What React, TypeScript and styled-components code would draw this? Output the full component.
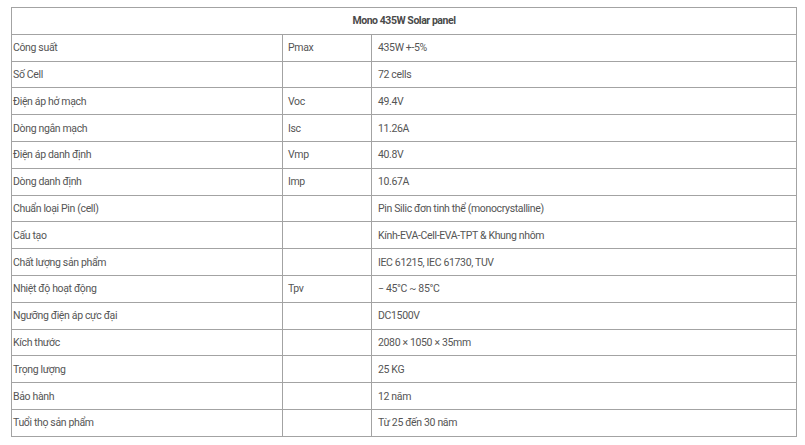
import React from "react";
import styled, { createGlobalStyle } from "styled-components";

const GlobalStyle = createGlobalStyle`
  html, body {
    margin: 0;
    padding: 0;
    background: #ffffff;
  }
  body {
    font-family: Roboto, "Noto Sans", Arial, sans-serif;
  }
`;

const Page = styled.div`
  padding: 7px 9px 0 11px;
`;

const SpecTable = styled.table`
  width: 786px;
  border-collapse: collapse;
  table-layout: fixed;
  border: 1px solid #a3a3a3;
  font-size: 10.5px;
  letter-spacing: -0.35px;
  color: #555555;
`;

const HeadCell = styled.th`
  height: 25.8px;
  padding: 0;
  border: 1px solid #a3a3a3;
  font-weight: 700;
  letter-spacing: -0.45px;
  text-align: center;
  color: #4a4a4a;
`;

const Cell = styled.td<{ $pad: number }>`
  height: 25.8px;
  padding: 0 0 0 ${(p) => p.$pad}px;
  border: 1px solid #a3a3a3;
  vertical-align: middle;
  white-space: nowrap;
`;

const rows: [string, string, string][] = [
  ["Công suất", "Pmax", "435W +-5%"],
  ["Số Cell", "", "72 cells"],
  ["Điện áp hở mạch", "Voc", "49.4V"],
  ["Dòng ngắn mạch", "Isc", "11.26A"],
  ["Điện áp danh định", "Vmp", "40.8V"],
  ["Dòng danh định", "Imp", "10.67A"],
  ["Chuẩn loại Pin (cell)", "", "Pin Silic đơn tinh thể (monocrystalline)"],
  ["Cấu tạo", "", "Kính-EVA-Cell-EVA-TPT & Khung nhôm"],
  ["Chất lượng sản phẩm", "", "IEC 61215, IEC 61730, TUV"],
  ["Nhiệt độ hoạt động", "Tpv", "− 45°C ~ 85°C"],
  ["Ngưỡng điện áp cực đại", "", "DC1500V"],
  ["Kích thước", "", "2080 × 1050 × 35mm"],
  ["Trọng lượng", "", "25 KG"],
  ["Bảo hành", "", "12 năm"],
  ["Tuổi thọ sản phẩm", "", "Từ 25 đến 30 năm"],
];

export default function App() {
  return (
    <Page>
      <GlobalStyle />
      <SpecTable>
        <colgroup>
          <col style={{ width: 271 }} />
          <col style={{ width: 89 }} />
          <col />
        </colgroup>
        <thead>
          <tr>
            <HeadCell colSpan={3}>Mono 435W Solar panel</HeadCell>
          </tr>
        </thead>
        <tbody>
          {rows.map(([name, sym, value]) => (
            <tr key={name}>
              <Cell $pad={1}>{name}</Cell>
              <Cell $pad={5}>{sym}</Cell>
              <Cell $pad={6}>{value}</Cell>
            </tr>
          ))}
        </tbody>
      </SpecTable>
    </Page>
  );
}
